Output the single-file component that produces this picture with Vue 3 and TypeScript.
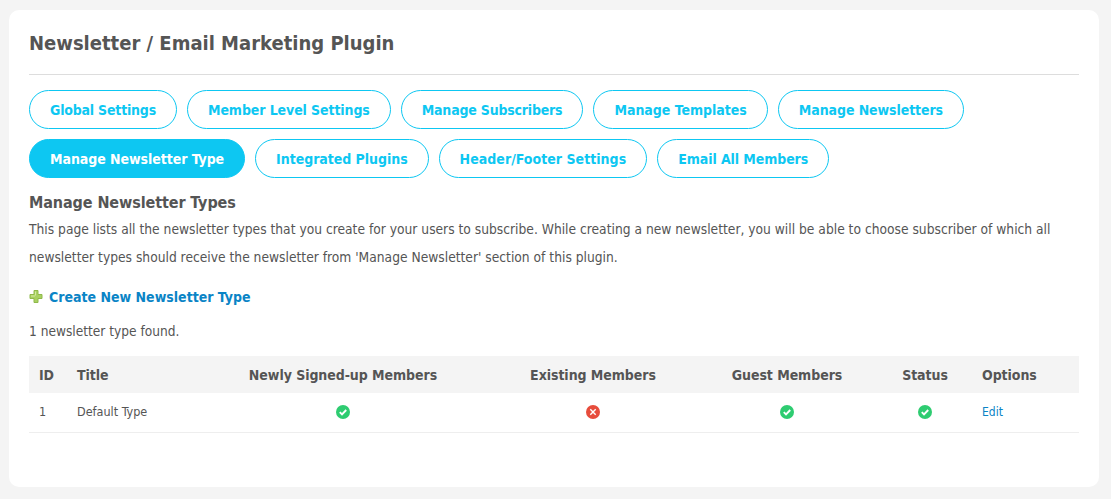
<script setup lang="ts">
interface Row {
  id: number
  title: string
  newly: boolean
  existing: boolean
  guest: boolean
  status: boolean
}
interface Tab {
  label: string
  spacing: number
  active?: boolean
}

const row1: Tab[] = [
  { label: 'Global Settings', spacing: -0.2 },
  { label: 'Member Level Settings', spacing: -0.1 },
  { label: 'Manage Subscribers', spacing: -0.2 },
  { label: 'Manage Templates', spacing: -0.02 },
  { label: 'Manage Newsletters', spacing: -0.09 },
]
const row2: Tab[] = [
  { label: 'Manage Newsletter Type', spacing: -0.06, active: true },
  { label: 'Integrated Plugins', spacing: -0.04 },
  { label: 'Header/Footer Settings', spacing: 0.03 },
  { label: 'Email All Members', spacing: -0.09 },
]
const rows: Row[] = [{ id: 1, title: 'Default Type', newly: true, existing: false, guest: true, status: true }]
</script>

<template>
  <div class="page">
    <main class="card">
      <h1 class="title">Newsletter / Email Marketing Plugin</h1>
      <nav class="tabs">
        <div class="tab-row">
          <a v-for="t in row1" :key="t.label" class="tab" :style="{ letterSpacing: t.spacing + 'px' }">{{ t.label }}</a>
        </div>
        <div class="tab-row">
          <a v-for="t in row2" :key="t.label" class="tab" :class="{ active: t.active }" :style="{ letterSpacing: t.spacing + 'px' }">{{ t.label }}</a>
        </div>
      </nav>
      <h2 class="sub">Manage Newsletter Types</h2>
      <p class="desc">This page lists all the newsletter types that you create for your users to subscribe. While creating a new newsletter, you will be able to choose subscriber of which all newsletter types should receive the newsletter from 'Manage Newsletter' section of this plugin.</p>
      <a class="create">
        <svg class="plus" width="14" height="15" viewBox="0 1 14 15">
          <path d="M5 1.5h4v4h4v4H9v4H5v-4H1v-4h4z" fill="#a9d162" stroke="#8fb94a" stroke-width="1" />
          <path d="M6 2.5h1v4H2v1H6z" fill="#d3ea9f" />
        </svg>
        Create New Newsletter Type
      </a>
      <p class="found">1 newsletter type found.</p>
      <table class="table">
        <colgroup>
          <col class="c-id" /><col class="c-title" /><col class="c-newly" /><col class="c-existing" /><col class="c-guest" /><col class="c-status" /><col class="c-options" />
        </colgroup>
        <thead>
          <tr>
            <th>ID</th>
            <th>Title</th>
            <th class="center">Newly Signed-up Members</th>
            <th class="center">Existing Members</th>
            <th class="center">Guest Members</th>
            <th class="center">Status</th>
            <th>Options</th>
          </tr>
        </thead>
        <tbody>
          <tr v-for="r in rows" :key="r.id">
            <td>{{ r.id }}</td>
            <td>{{ r.title }}</td>
            <td v-for="(v, i) in [r.newly, r.existing, r.guest, r.status]" :key="i" class="center">
              <svg class="state" width="14" height="14" viewBox="0 0 14 14">
                <circle cx="7" cy="7" r="7" :fill="v ? '#2ecc71' : '#e74c3c'" />
                <path v-if="v" d="M3.8 7.2l2.2 2.2 4.2-4.4" fill="none" stroke="#fff" stroke-width="1.9" />
                <path v-else d="M4.3 4.3l5.4 5.4M9.7 4.3l-5.4 5.4" fill="none" stroke="#fff" stroke-width="1.4" />
              </svg>
            </td>
            <td><a class="edit">Edit</a></td>
          </tr>
        </tbody>
      </table>
    </main>
  </div>
</template>

<style>
html, body { margin: 0; background: #f4f4f4; }
</style>

<style scoped>
.page {
  height: 499px;
  box-sizing: border-box;
  padding: 10px 12px 12px 9px;
  background: #f4f4f4;
  font-family: "DejaVu Sans Condensed", "DejaVu Sans", sans-serif;
  color: #555;
  overflow: hidden;
}
.card {
  height: 100%;
  box-sizing: border-box;
  background: #fff;
  border-radius: 10px;
  padding: 20px;
}
.title {
  margin: 0 0 15px;
  padding-bottom: 19px;
  height: 25px;
  line-height: 27px;
  font-size: 20px;
  font-weight: 700;
  color: #555;
  border-bottom: 1px solid #ddd;
}
.tabs { display: flex; flex-direction: column; gap: 10px; }
.tab-row { display: flex; gap: 10px; }
.tab {
  box-sizing: border-box;
  height: 39px;
  line-height: 39px;
  padding: 0 20px;
  border: 1px solid #0dc7f2;
  border-radius: 20px;
  font-size: 14px;
  font-weight: 700;
  color: #0dc7f2;
  background: #fff;
}
.tab.active { background: #0dc7f2; color: #fff; }
.sub {
  margin: 15px 0 2px;
  font-size: 16px;
  line-height: 20px;
  font-weight: 700;
  letter-spacing: -0.1px;
  color: #555;
}
.desc {
  margin: 0;
  font-size: 13.7px;
  line-height: 28px;
  color: #555;
}
.create {
  display: flex;
  align-items: center;
  gap: 6px;
  margin-top: 16px;
  height: 20px;
  font-size: 14px;
  font-weight: 700;
  color: #0a84c6;
}
.plus { display: block; }
.found {
  margin: 14px 0 0;
  font-size: 13.6px;
  line-height: 20px;
}
.table {
  width: 1050px;
  margin-top: 15px;
  table-layout: fixed;
  border-collapse: collapse;
}
.c-id { width: 38px; }
.c-title { width: 129px; }
.c-newly { width: 294px; }
.c-existing { width: 206px; }
.c-guest { width: 182px; }
.c-status { width: 94px; }
.c-options { width: 107px; }
th {
  height: 37px;
  padding: 0 10px;
  background: #f4f4f4;
  font-size: 14px;
  font-weight: 700;
  letter-spacing: -0.06px;
  text-align: left;
  color: #555;
  white-space: nowrap;
}
td {
  height: 37px;
  padding: 0 10px 2px;
  font-size: 12.5px;
  border-bottom: 1px solid #eee;
  color: #555;
}
.center { text-align: center; }
.state { display: block; margin: 0 auto; }
.edit { color: #0a84c6; font-size: 12px; }
</style>
